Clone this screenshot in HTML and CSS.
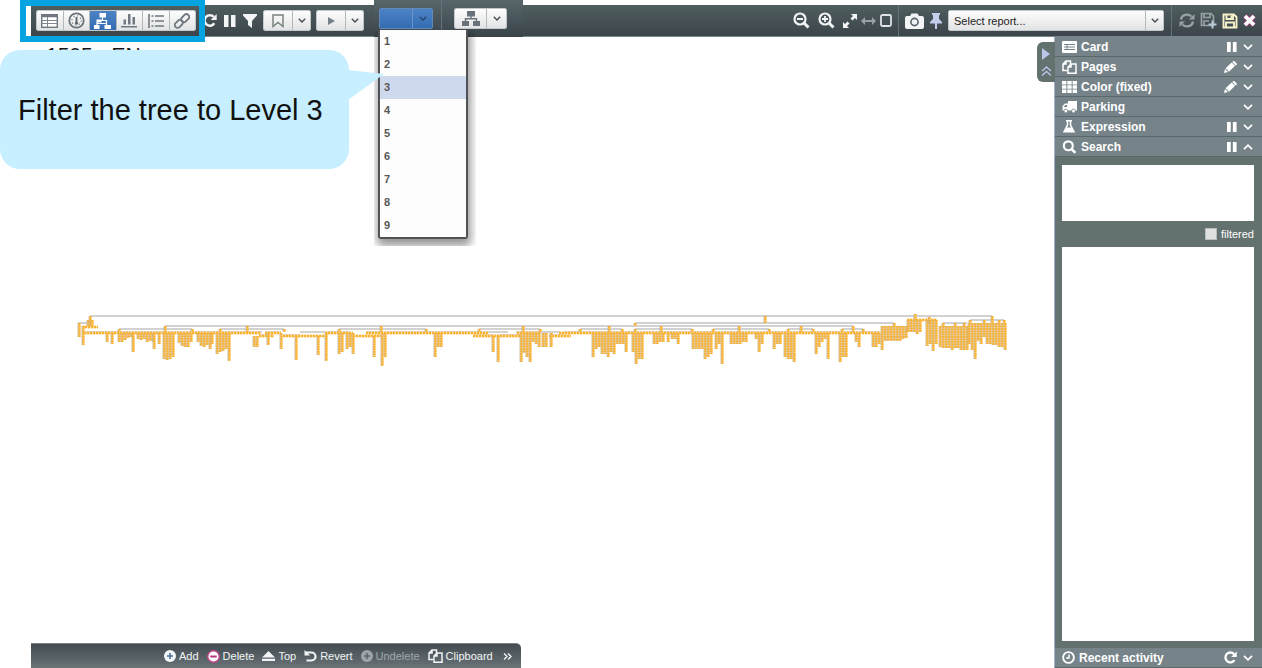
FILE: index.html
```html
<!DOCTYPE html>
<html lang="en">
<head>
<meta charset="utf-8">
<title>Tree view</title>
<link rel="stylesheet" href="styles.css">
</head>
<body>
<svg class="defs" aria-hidden="true">
  <symbol id="i-pause" viewBox="0 0 12 12"><path fill="currentColor" d="M0 0h4.500v12H0zM7 0h4.500v12H7z"/></symbol>
  <symbol id="i-down" viewBox="0 0 10 6"><path d="M1 .8l4 4 4-4" fill="none" stroke="currentColor" stroke-width="1.700"/></symbol>
  <symbol id="i-up" viewBox="0 0 10 6"><path d="M1 5.200l4-4 4 4" fill="none" stroke="currentColor" stroke-width="1.700"/></symbol>
  <symbol id="i-pencil" viewBox="0 0 13 12"><path fill="currentColor" d="M0 12l1-4 3 3zM1.600 7.300L7.600 1.500l3.500 3.300L5 10.700zM8.200 1L9.200 .2q.7-.4 1.300 0l2.200 2.200q.5.6 0 1.300l-1 .9z"/></symbol>
  <symbol id="i-pages" viewBox="0 0 15 14"><path d="M5 10.500H1V4l3-3h4.500v3M4 1v3H1M6 13.200V7l3-3h5v9.200zM9 4v3H6" fill="none" stroke="currentColor" stroke-width="1.500"/></symbol>
  <symbol id="i-search" viewBox="0 0 15 15"><circle cx="6.200" cy="6.200" r="4.800" fill="none" stroke="currentColor" stroke-width="2.300"/><path d="M9.800 9.800l4 4" stroke="currentColor" stroke-width="2.800"/></symbol>
  <symbol id="i-reload" viewBox="0 0 14 14"><path d="M11.300 9.800A5.300 5.300 0 1 1 10.800 3.400" fill="none" stroke="currentColor" stroke-width="2.500"/><path d="M13.700 .5v6H7.700z" fill="currentColor"/></symbol>
  <symbol id="i-tree" viewBox="0 0 18 15"><path d="M5 0h8v5.500H5zM0 10h7v5H0zM11 10h7v5h-7z" fill="currentColor"/><path d="M9 5v2.800M3.500 11V7.800h11V11" fill="none" stroke="currentColor" stroke-width="1.400"/></symbol>
  <symbol id="i-save" viewBox="0 0 16 16"><path d="M1.500 1.500h10.500l2.500 2.500v10.500h-13zM4.500 2v4h6.500V2M4 14V9.500h8V14" fill="none" stroke="currentColor" stroke-width="1.900"/><path d="M8.500 2.500h1.500v3H8.500z" fill="currentColor"/></symbol>
</svg>

<header class="toolbar">
  <div class="group views">
    <button class="seg" aria-label="Table"><svg width="17" height="14" viewBox="0 0 17 14"><rect x=".7" y=".7" width="15.600" height="12.600" fill="#fff" stroke="#6f7880" stroke-width="1.400"/><path d="M1 2h15" stroke="#6f7880" stroke-width="2.400"/><path d="M1 6.500h15M1 9.500h15M6.500 3v10" stroke="#7f888f"/></svg></button>
    <button class="seg" aria-label="Gauge"><svg width="17" height="17" viewBox="0 0 17 17"><circle cx="8.500" cy="8.500" r="7.200" fill="none" stroke="#6b747b" stroke-width="1.800"/><circle cx="8.500" cy="8.500" r="4.600" fill="none" stroke="#7d868c" stroke-width="1.300" stroke-dasharray="1.200 2.400"/><path d="M8.500 5v6.500" stroke="#59636a" stroke-width="1.800"/><circle cx="8.500" cy="11" r="1.500" fill="#59636a"/></svg></button>
    <button class="seg on" aria-label="Tree"><svg width="17" height="16" viewBox="0 0 17 16"><path d="M5.500 0h6.500v4.500H5.500zM2.500 6.500h5v3h-5zM0 12h5.500v4H0zM10.500 12H17v4h-6.500z" fill="#fff"/><path d="M8.500 4v3.500H5M8.500 7.500h4v5M3 9v3.500M3 10.500h9.500" fill="none" stroke="#fff" stroke-width="1.200"/></svg></button>
    <button class="seg" aria-label="Bar chart"><svg width="16" height="14" viewBox="0 0 16 14"><path d="M2.500 5.500h2.500v5H2.500zM7 0h2.500v10.500H7zM11.500 3H14v7.500h-2.500zM0 12h16v1.500H0z" fill="#6f7880"/></svg></button>
    <button class="seg" aria-label="List"><svg width="16" height="14" viewBox="0 0 16 14"><path d="M1 0v14M3.500 2h2M3.500 7h2M3.500 12h2M7 2h9M7 7h9M7 12h9" stroke="#6f7880" stroke-width="1.600"/></svg></button>
    <button class="seg" aria-label="Link"><svg width="16" height="16" viewBox="0 0 16 16"><g fill="none" stroke="#6f7880" stroke-width="1.800"><rect x="6.500" y="2.500" width="9" height="5.500" rx="2.700" transform="rotate(-45 11 5)"/><rect x=".5" y="8" width="9" height="5.500" rx="2.700" transform="rotate(-45 5 11)"/></g></svg></button>
  </div>
  <div class="icons start">
    <button class="ico" aria-label="Reload"><svg width="14" height="15"><use href="#i-reload"/></svg></button>
    <button class="ico" aria-label="Pause"><svg width="12" height="12"><use href="#i-pause"/></svg></button>
    <button class="ico" aria-label="Filter"><svg width="14" height="14" viewBox="0 0 14 14"><path d="M0 0h14v1.500L9 7v7l-4-3V7L0 1.500z" fill="currentColor"/></svg></button>
  </div>
  <div class="group split">
    <button class="seg" aria-label="Bookmark"><svg width="12" height="14" viewBox="0 0 12 14"><path d="M1 1h10v11.500L6 8.500l-5 4z" fill="none" stroke="#78827f" stroke-width="1.500"/></svg></button>
    <button class="seg drop" aria-label="Bookmark options"><svg width="8" height="5"><use href="#i-down"/></svg></button>
  </div>
  <div class="group split">
    <button class="seg" aria-label="Play"><svg width="7" height="8" viewBox="0 0 7 8"><path d="M0 0l7 4-7 4z" fill="#76828a"/></svg></button>
    <button class="seg drop" aria-label="Play options"><svg width="8" height="5"><use href="#i-down"/></svg></button>
  </div>
  <div class="level-area">
    <div class="group level">
      <button class="seg on" aria-label="Level"></button>
      <button class="seg on drop" aria-label="Choose level"><svg width="8" height="5"><use href="#i-down"/></svg></button>
    </div>
    <span class="rule"></span>
    <div class="group layout">
      <button class="seg" aria-label="Tree layout"><svg class="grey" width="18" height="15"><use href="#i-tree"/></svg></button>
      <button class="seg drop" aria-label="Layout options"><svg width="8" height="5"><use href="#i-down"/></svg></button>
    </div>
    <div class="menu-shade">
      <div class="menu" role="listbox" aria-label="Level">
        <button role="option">1</button><button role="option">2</button><button role="option" aria-selected="true" class="picked">3</button><button role="option">4</button><button role="option">5</button><button role="option">6</button><button role="option">7</button><button role="option">8</button><button role="option">9</button>
      </div>
    </div>
  </div>
  <div class="icons zooms">
    <button class="ico" aria-label="Zoom out"><svg width="17" height="17" viewBox="0 0 17 17"><circle cx="7" cy="7" r="5.500" fill="none" stroke="currentColor" stroke-width="2.200"/><path d="M4 7h6" stroke="currentColor" stroke-width="2"/><path d="M11 11l4.500 4.500" stroke="currentColor" stroke-width="3"/></svg></button>
    <button class="ico" aria-label="Zoom in"><svg width="17" height="17" viewBox="0 0 17 17"><circle cx="7" cy="7" r="5.500" fill="none" stroke="currentColor" stroke-width="2.200"/><path d="M4 7h6M7 4v6" stroke="currentColor" stroke-width="1.800"/><path d="M11 11l4.500 4.500" stroke="currentColor" stroke-width="3"/></svg></button>
    <button class="ico" aria-label="Fit"><svg width="14" height="14" viewBox="0 0 14 14"><path d="M8 0h6v6l-2-2-2.500 2.500-2-2L10 2zM6 14H0V8l2 2 2.500-2.500 2 2L4 12z" fill="currentColor"/></svg></button>
    <button class="ico dim tight" aria-label="Fit width"><svg width="15" height="8" viewBox="0 0 15 8"><path d="M0 4l4-4v3h7V0l4 4-4 4V5H4v3z" fill="currentColor"/></svg></button>
    <button class="ico tight" aria-label="Frame"><svg width="12" height="13" viewBox="0 0 12 13"><rect x="1" y="1" width="10" height="11" rx="1.500" fill="none" stroke="#dfe3e5" stroke-width="1.800"/></svg></button>
  </div>
  <span class="rule"></span>
  <button class="ico" aria-label="Snapshot"><svg width="19" height="16" viewBox="0 0 19 16"><path d="M2 3h3l1.500-2.500h6L14 3h3q2 0 2 2v9q0 2-2 2H2q-2 0-2-2V5q0-2 2-2z" fill="#f2f4f5"/><circle cx="9.500" cy="9" r="3.600" fill="none" stroke="#59636a" stroke-width="1.600"/></svg></button>
  <button class="ico pin" aria-label="Pin"><svg width="12" height="16" viewBox="0 0 12 16"><path d="M2 0h8v2H9v4l3 3v1.500H7V16H5v-5.500H0V9l3-3V2H2z" fill="#c3cdec"/></svg></button>
  <label class="report"><select aria-label="Report"><option>Select report...</option></select><span class="report-arrow"><svg width="8" height="5"><use href="#i-down"/></svg></span></label>
  <span class="rule"></span>
  <div class="icons files">
    <button class="ico dim" aria-label="Refresh"><svg width="16" height="15" viewBox="0 0 16 15"><path d="M2 6.500a6 5.500 0 0 1 10.500-3M14 8.500a6 5.500 0 0 1-10.500 3" fill="none" stroke="currentColor" stroke-width="2.200"/><path d="M15.500 1v5.500H10zM.5 14V8.500H6z" fill="currentColor"/></svg></button>
    <button class="ico dim" aria-label="Save as"><svg width="17" height="17" viewBox="0 0 17 17"><path d="M1.500 1.500h9.500l2.500 2.500v9.500h-12zM4 2v3.500h6V2M4 13.500V9h5" fill="none" stroke="currentColor" stroke-width="1.700"/><path d="M12.500 8.500v8M8.500 12.500h8" stroke="#b9cad6" stroke-width="2"/></svg></button>
    <button class="ico save" aria-label="Save"><svg width="16" height="16"><use href="#i-save"/></svg></button>
    <button class="ico" aria-label="Close"><svg width="13" height="13" viewBox="0 0 13 13"><path d="M2 2l9 9M11 2l-9 9" stroke="#b23a83" stroke-width="5"/><path d="M2 2l9 9M11 2l-9 9" stroke="#fff" stroke-width="3.800"/></svg></button>
  </div>
</header>

<div class="workspace">
  <main class="stage">
    <h1 class="tree-title">1505 - EN</h1>
    <svg class="tree" id="tree" viewBox="31 37 1023 606" role="img" aria-label="Organisation tree"></svg>
    <nav class="actions">
      <button><svg width="12" height="12" viewBox="0 0 12 12"><circle cx="6" cy="6" r="6" fill="#f4f7fa"/><path d="M6 3v6M3 6h6" stroke="#4d7199" stroke-width="1.600"/></svg>Add</button>
      <button><svg width="13" height="13" viewBox="0 0 12 12"><circle cx="6" cy="6" r="5.300" fill="#fff" stroke="#c2468c" stroke-width="1.300"/><path d="M3 6h6" stroke="#b8327d" stroke-width="1.800"/></svg>Delete</button>
      <button><svg width="13" height="10" viewBox="0 0 13 10"><path d="M6.500 0L13 6.500H0zM0 7.700h13V10H0z" fill="#f2f4f5"/></svg>Top</button>
      <button><svg width="13" height="12" viewBox="0 0 12 12"><path d="M1 2.500h6a4 4 0 0 1 0 8H2" fill="none" stroke="#f2f4f5" stroke-width="2.200"/><path d="M0 0l5.500 5.500H0z" fill="#f2f4f5"/></svg>Revert</button>
      <button class="off" disabled><svg width="12" height="12" viewBox="0 0 12 12"><circle cx="6" cy="6" r="6" fill="#9ea5aa"/><path d="M6 3v6M3 6h6" stroke="#5c666d" stroke-width="1.600"/></svg>Undelete</button>
      <button><svg width="15" height="14"><use href="#i-pages"/></svg>Clipboard</button>
      <button class="more" aria-label="More"><svg width="9" height="7" viewBox="0 0 9 7"><path d="M1 .5l3 3-3 3M5 .5l3 3-3 3" fill="none" stroke="#f2f4f5" stroke-width="1.400"/></svg></button>
    </nav>
  </main>

  <aside class="sidebar">
    <div class="handle">
      <button aria-label="Hide panel"><svg width="8" height="12" viewBox="0 0 8 12"><path d="M0 0l8 6-8 6z" fill="#b9c6ea"/></svg></button>
      <button aria-label="Collapse all"><svg width="11" height="10" viewBox="0 0 11 10"><path d="M1 5l4.500-4L10 5M1 9.500l4.500-4 4.500 4" fill="none" stroke="#b9c6ea" stroke-width="1.400"/></svg></button>
    </div>
    <button class="panel"><svg width="15" height="12" viewBox="0 0 15 12"><rect width="15" height="12" rx="1" fill="#fff"/><path d="M2 3.500h11M2 6h11M2 8.500h11M5 3v6" stroke="#76828a"/></svg><span>Card</span><svg width="10" height="10"><use href="#i-pause"/></svg><svg width="10" height="6"><use href="#i-down"/></svg></button>
    <button class="panel"><svg width="15" height="14"><use href="#i-pages"/></svg><span>Pages</span><svg width="13" height="12"><use href="#i-pencil"/></svg><svg width="10" height="6"><use href="#i-down"/></svg></button>
    <button class="panel"><svg width="15" height="12" viewBox="0 0 15 12"><path d="M0 0h4.400v3.400H0zM5.300 0h4.400v3.400H5.300zM10.600 0H15v3.400h-4.400zM0 4.300h4.400v3.400H0zM5.300 4.300h4.400v3.400H5.300zM10.600 4.300H15v3.400h-4.400zM0 8.600h4.400V12H0zM5.300 8.600h4.400V12H5.300zM10.600 8.600H15V12h-4.400z" fill="#fff"/></svg><span>Color (fixed)</span><svg width="13" height="12"><use href="#i-pencil"/></svg><svg width="10" height="6"><use href="#i-down"/></svg></button>
    <button class="panel"><svg width="15" height="12" viewBox="0 0 15 12"><path d="M6 0h9v9.500H.5V5L3 2.500h3z" fill="#fff"/><path d="M2 5.500L3.500 4H5v2H2z" fill="#76828a"/><circle cx="3.800" cy="10" r="1.900" fill="#fff" stroke="#76828a" stroke-width=".8"/><circle cx="11.500" cy="10" r="1.900" fill="#fff" stroke="#76828a" stroke-width=".8"/></svg><span>Parking</span><svg width="10" height="6"><use href="#i-down"/></svg></button>
    <button class="panel"><svg width="15" height="13" viewBox="0 0 15 13"><path d="M4 .8h6M5.500 1v4L2 11.800h10L8.500 5V1" fill="none" stroke="#fff" stroke-width="1.500"/><path d="M4.500 7.500h5l2 4h-9z" fill="#fff"/></svg><span>Expression</span><svg width="10" height="10"><use href="#i-pause"/></svg><svg width="10" height="6"><use href="#i-down"/></svg></button>
    <button class="panel"><svg width="15" height="14"><use href="#i-search"/></svg><span>Search</span><svg width="10" height="10"><use href="#i-pause"/></svg><svg width="10" height="6"><use href="#i-up"/></svg></button>
    <div class="search">
      <textarea aria-label="Search text"></textarea>
      <label class="filtered"><input type="checkbox">filtered</label>
      <div class="results"></div>
    </div>
    <button class="panel"><svg width="13" height="13" viewBox="0 0 13 13"><circle cx="6.500" cy="6.500" r="5.400" fill="none" stroke="#fff" stroke-width="1.900"/><path d="M7 3.500V7H4" fill="none" stroke="#fff" stroke-width="1.500"/></svg><span>Recent activity</span><svg width="13" height="13"><use href="#i-reload"/></svg><svg width="10" height="6"><use href="#i-down"/></svg></button>
  </aside>
</div>

<div class="focus-frame"></div>
<div class="callout"><p>Filter the tree to Level 3</p><svg class="tail" width="36" height="30" viewBox="0 0 36 30"><path d="M0 0l36 4L0 30z" fill="#c7efff"/></svg></div>
<script src="tree.js"></script>
</body>
</html>
```

FILE: styles.css
```css
* { box-sizing: border-box; }
body {
  margin: 0;
  min-height: 100vh;
  display: flex;
  flex-direction: column;
  position: relative;
  background: #fff;
  font-family: "Liberation Sans", Arial, sans-serif;
  font-size: 11px;
  color: #222;
}
button { border: 0; padding: 0; margin: 0; background: none; font: inherit; color: inherit; }
svg { display: block; flex: none; }
.defs { position: absolute; width: 0; height: 0; }

.toolbar {
  display: flex;
  align-items: center;
  height: 32px;
  margin: 5px 0 0 31px;
  padding: 0 6px 0 5px;
  background: linear-gradient(#505e5f, #3b454b);
  border-bottom: 1px solid #79868b;
  color: #f2f4f5;
}
.group { display: flex; height: 21px; border-radius: 2px; overflow: hidden; border: 1px solid #c4c8ca; }
.seg {
  flex: 1;
  display: flex;
  align-items: center;
  justify-content: center;
  background: linear-gradient(#fdfdfd, #e2e3e4);
  color: #444c52;
}
.seg + .seg { border-left: 1px solid #b4b8ba; }
.seg.on { background: linear-gradient(#4c83c6, #346cb2); }
.seg.drop { flex: none; width: 18px; }
.views { width: 160px; }
.split { width: 48px; margin-right: 5px; }
.icons { display: flex; align-items: center; }
.start { gap: 7px; margin: 0 6px 0 7px; }
.rule { width: 1px; align-self: stretch; background: #66727a; }
.grey { color: #69727a; }

.level-area {
  position: relative;
  align-self: stretch;
  display: flex;
  align-items: center;
  gap: 8px;
  width: 149px;
  margin: -5px 0 -1px 5px;
  padding: 0 0 1px 5px;
  background: linear-gradient(#57666a, #3a444a);
}
.level { width: 54px; border-color: #6389b8; }
.level .seg + .seg { border-color: #6b95c9; }
.level .drop { width: 20px; color: #24456f; }
.layout { width: 53px; margin-left: 4px; }
.layout .drop { width: 20px; }
.menu-shade {
  position: absolute;
  z-index: 2;
  left: 0;
  top: 30px;
  width: 102px;
  padding: 0 8px 7px 4px;
  overflow: hidden;
}
.menu {
  display: flex;
  flex-direction: column;
  background: #fdfdfd;
  border: 2px solid #505255;
  border-top: 0;
  border-radius: 0 0 3px 3px;
  box-shadow: 1px 5px 8px 2px rgba(0, 0, 0, .4);
}
.menu button { height: 23px; padding: 0 0 2px 4px; text-align: left; font-weight: bold; color: #585858; }
.menu .picked { background: #ced9ed; }

.zooms { gap: 8px; margin: 0 6px 0 auto; }
.zooms .tight { margin-left: -4px; }
.dim { color: #98a1a5; }
.rule + .ico { margin-left: 6px; }
.pin { margin: 0 6px 0 6px; }
.report { position: relative; width: 216px; margin-right: 7px; }
.report select {
  display: block;
  width: 100%;
  height: 21px;
  padding: 0 24px 0 5px;
  appearance: none;
  border: 1px solid #c4c8ca;
  border-radius: 2px;
  background: linear-gradient(#fdfdfd, #e2e3e4);
  font: inherit;
  color: #222;
}
.report-arrow {
  position: absolute;
  inset: 1px 1px 1px auto;
  width: 18px;
  display: flex;
  align-items: center;
  justify-content: center;
  border-left: 1px solid #b4b8ba;
  color: #444c52;
  pointer-events: none;
}
.files { gap: 5px; margin-left: 7px; }
.save { color: #f6f1c8; }

.workspace { flex: 1; display: flex; margin-left: 31px; }
.stage { flex: 1; position: relative; display: flex; flex-direction: column; min-width: 0; }
.tree { flex: 1; width: 100%; min-height: 0; }
.tree-title { position: absolute; left: 15px; top: 6px; margin: 0; font-size: 21px; line-height: 24px; font-weight: normal; color: #111; }
.actions {
  align-self: flex-start;
  display: flex;
  align-items: center;
  gap: 8px;
  height: 25px;
  padding: 0 9px 0 133px;
  border-top: 1px solid #78848a;
  border-radius: 0 5px 0 0;
  background: linear-gradient(#414b51, #6a7477);
  color: #f2f4f5;
}
.actions button { display: flex; align-items: center; gap: 3px; }
.actions .off { color: #a0a7ab; }
.actions .more { margin-left: 2px; }

.sidebar {
  position: relative;
  width: 208px;
  display: flex;
  flex-direction: column;
  background: #63716f;
  border-left: 1px solid #a5b3cf;
}
.handle {
  position: absolute;
  right: 100%;
  top: 5px;
  width: 18px;
  height: 40px;
  display: flex;
  flex-direction: column;
  align-items: center;
  justify-content: space-evenly;
  background: #63716f;
  border-radius: 6px 0 0 6px;
}
.panel {
  display: flex;
  align-items: center;
  gap: 4px;
  height: 20px;
  padding: 0 9px 0 7px;
  background: #76848a;
  border-bottom: 1px solid #5a686b;
  color: #fff;
  font-size: 12px;
  font-weight: bold;
  text-align: left;
}
.panel span { flex: 1; }
.panel svg:last-child { margin-left: 2px; }
.search { flex: 1; display: flex; flex-direction: column; padding: 8px 8px 7px 7px; }
.search textarea { display: block; height: 56px; padding: 4px; border: 0; resize: none; background: #fff; font: inherit; }
.filtered { display: flex; align-items: center; justify-content: flex-end; gap: 4px; height: 26px; color: #fff; }
.filtered input { appearance: none; width: 12px; height: 12px; margin: 0; background: #dfe1e1; border: 1px solid #b7bcbc; }
.results { flex: 1; background: #fff; }

.focus-frame { position: absolute; left: 20px; top: 0; width: 185px; height: 42px; border: 6px solid #05a4e1; pointer-events: none; }
.callout {
  position: absolute;
  z-index: 3;
  left: 0;
  top: 50px;
  width: 349px;
  height: 119px;
  display: flex;
  align-items: center;
  padding: 2px 18px 0;
  border-radius: 20px;
  background: #c7efff;
  color: #111;
  font-size: 29px;
  white-space: nowrap;
}
.callout p { margin: 0; }
.tail { position: absolute; left: 348px; top: 20px; }
```

FILE: tree.js
```js
// Connector lines: [x1, x2, y]
const links = [
  [90, 992, 316], [78, 90, 323], [635, 894, 323], [165, 853, 326],
  [119, 192, 329], [220, 284, 329], [339, 426, 329], [479, 540, 329], [580, 622, 329],
  [635, 692, 329], [713, 769, 329], [788, 813, 329], [842, 863, 329],
  [84, 262, 332], [266, 281, 332], [300, 325, 332], [327, 350, 332], [366, 480, 332],
  [480, 508, 332], [516, 560, 332], [564, 880, 332], [259, 272, 335], [284, 300, 335],
  [474, 494, 335], [498, 519, 335], [550, 565, 335],
  [970, 1004, 320], [943, 967, 323], [907, 930, 320]
];

// Rows of leaf nodes: [x1, x2, y]
const rows = [
  [82, 98, 327], [84, 261, 333], [265, 281, 333], [325, 353, 333], [366, 488, 333],
  [517, 540, 333], [559, 880, 333], [259, 274, 336], [283, 328, 336], [350, 381, 336],
  [473, 521, 336], [549, 571, 336], [907, 937, 320]
];

// Columns of nodes, 3 apart: first x, top, bottoms
const columns = [
  [79, 323, [337]], [83, 326, [345]], [90, 316, [326]], [88, 320, [326]], [92, 320, [326]],
  [107, 333, [342]], [112, 333, [344]], [119, 333, [342, 342, 340, 338, 337]],
  [133, 333, [352]], [138, 333, [339, 340]], [144, 333, [339, 342, 341, 342]],
  [154, 333, [349]], [159, 333, [344]], [164, 333, [359, 360, 359, 357]],
  [179, 333, [343, 346, 347, 347, 342]], [198, 333, [342, 346, 347, 345, 349]], [212, 333, [344]],
  [217, 333, [354, 352, 351, 349, 361]], [254, 336, [347, 347]], [268, 333, [345]],
  [281, 333, [349]], [296, 336, [360]], [318, 336, [355]], [326, 333, [361]],
  [339, 333, [354, 352]], [347, 333, [349, 347, 354]], [374, 336, [357]], [382, 333, [366, 357]],
  [435, 333, [357, 347, 347]], [493, 336, [352]], [498, 336, [362]],
  [521, 333, [362, 353, 357, 362, 342, 344, 347]], [543, 333, [347, 347]], [551, 333, [347]],
  [593, 333, [357, 349, 347, 354, 354, 357, 352, 354, 344, 344, 344, 352]],
  [633, 333, [352, 364, 359, 359]], [654, 333, [344, 344, 342, 342]], [668, 333, [342]],
  [672, 333, [339, 339, 344]], [693, 333, [349, 349, 349, 349, 359, 357, 354]],
  [716, 333, [349, 344, 364]], [731, 333, [344, 344, 344, 344, 342, 342]],
  [756, 333, [339, 352, 344]], [774, 333, [349, 344, 344]], [785, 333, [357, 359, 359, 362]],
  [816, 333, [354, 347, 342, 339, 359]], [840, 333, [362, 357, 357]], [856, 333, [342, 347]],
  [873, 333, [347, 347, 344]],
  [882, 326, [350, 341, 341, 341, 341, 341, 341, 339, 338]],
  [908, 320, [332, 332, 332, 334, 332]], [915, 314, [320]], [929, 317, [324]],
  [927, 320, [346, 344, 351, 344]],
  [940, 326, [347, 348, 348, 348, 350, 348, 348, 350, 350, 350]],
  [969, 323, [344, 350, 359, 341, 344, 337, 344, 344, 345, 345, 347, 347, 350]],
  [992, 316, [323]], [943, 323, [326]], [955, 323, [326]], [964, 323, [326]],
  [970, 320, [323]], [984, 320, [323]], [999, 320, [323]], [1004, 320, [323]],
  [765, 316, [323]], [894, 323, [326]], [635, 323, [326]],
  ...[165, 247, 381, 523, 609, 661, 739, 801, 853].map(x => [x, 326, [332]]),
  ...[119, 192, 220, 284, 339, 426, 479, 540, 580, 622, 635, 692, 713, 769, 788, 813, 842, 863].map(x => [x, 329, [332]])
];

const svg = document.getElementById('tree');
function draw(d, stroke, width, dash) {
  const p = document.createElementNS('http://www.w3.org/2000/svg', 'path');
  p.setAttribute('d', d);
  p.setAttribute('stroke', stroke);
  p.setAttribute('stroke-width', width);
  p.setAttribute('fill', 'none');
  if (dash) p.setAttribute('stroke-dasharray', dash);
  svg.appendChild(p);
}
const horizontal = list => list.map(([a, b, y]) => `M${a} ${y}H${b}`).join('');
const vertical = shift => columns.map(([x, top, ends]) =>
  ends.map((end, i) => `M${x + i * 3 + shift} ${top}V${end}`).join('')).join('');

draw(horizontal(links), '#c4c4c4', 1.6);
draw(horizontal(rows), '#fcdca2', 2.6);
draw(horizontal(rows), '#fcb22a', 2.4, '2 1');
draw(vertical(0.2), '#fbcf86', 2.6);
draw(vertical(0.4), '#ffb021', 2.2, '1.8 .7');
draw(vertical(-1), '#bdb095', 0.7);
```
